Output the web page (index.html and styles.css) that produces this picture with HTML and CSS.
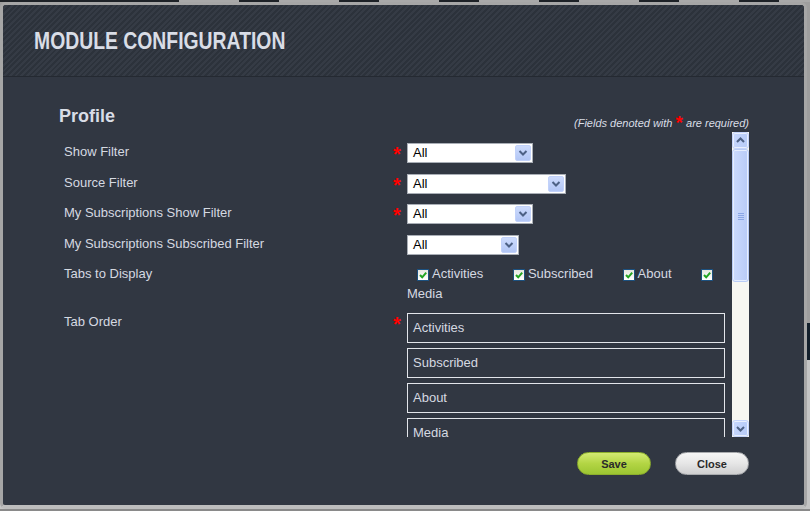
FILE: index.html
```html
<!DOCTYPE html>
<html>
<head>
<meta charset="utf-8">
<link rel="stylesheet" href="styles.css">
</head>
<body>
<div class="topstrip"><div class="ts-dark"></div><div class="ts-pattern"></div></div>
<div class="modal">
  <div class="header"><h1 class="title">MODULE CONFIGURATION</h1></div>
  <div class="content">
    <div class="profile-row">
      <h2 class="profile">Profile</h2>
      <div class="note">(Fields denoted with <span class="note-star">*</span> are required)</div>
    </div>
    <div class="scroll">
      <div class="scroll-content">
        <div class="row sel-row">
          <div class="label">Show Filter</div><div class="req">*</div>
          <div class="field"><div class="select w126"><span class="val">All</span><span class="drop"><svg width="14" height="14" viewBox="0 0 14 14"><polyline points="3.5,5 7,8.5 10.5,5" fill="none" stroke="#4d6185" stroke-width="2"/></svg></span></div></div>
        </div>
        <div class="row sel-row">
          <div class="label">Source Filter</div><div class="req">*</div>
          <div class="field"><div class="select w159"><span class="val">All</span><span class="drop"><svg width="14" height="14" viewBox="0 0 14 14"><polyline points="3.5,5 7,8.5 10.5,5" fill="none" stroke="#4d6185" stroke-width="2"/></svg></span></div></div>
        </div>
        <div class="row sel-row">
          <div class="label">My Subscriptions Show Filter</div><div class="req">*</div>
          <div class="field"><div class="select w126"><span class="val">All</span><span class="drop"><svg width="14" height="14" viewBox="0 0 14 14"><polyline points="3.5,5 7,8.5 10.5,5" fill="none" stroke="#4d6185" stroke-width="2"/></svg></span></div></div>
        </div>
        <div class="row sel-row last-sel">
          <div class="label">My Subscriptions Subscribed Filter</div><div class="req"></div>
          <div class="field"><div class="select w112"><span class="val">All</span><span class="drop"><svg width="14" height="14" viewBox="0 0 14 14"><polyline points="3.5,5 7,8.5 10.5,5" fill="none" stroke="#4d6185" stroke-width="2"/></svg></span></div></div>
        </div>
        <div class="row cb-row">
          <div class="label">Tabs to Display</div><div class="req"></div>
          <div class="field cb-field"><span class="cb"><svg width="10" height="10" viewBox="0 0 10 10"><polyline points="2,5 4.2,7.3 8.2,2.6" fill="none" stroke="#22a322" stroke-width="2"/></svg></span><span class="cb-label">Activities</span> <span class="cb"><svg width="10" height="10" viewBox="0 0 10 10"><polyline points="2,5 4.2,7.3 8.2,2.6" fill="none" stroke="#22a322" stroke-width="2"/></svg></span><span class="cb-label">Subscribed</span> <span class="cb"><svg width="10" height="10" viewBox="0 0 10 10"><polyline points="2,5 4.2,7.3 8.2,2.6" fill="none" stroke="#22a322" stroke-width="2"/></svg></span><span class="cb-label">About</span> <span class="cb"><svg width="10" height="10" viewBox="0 0 10 10"><polyline points="2,5 4.2,7.3 8.2,2.6" fill="none" stroke="#22a322" stroke-width="2"/></svg></span> <span class="cb-label">Media</span></div>
        </div>
        <div class="row order-row">
          <div class="label">Tab Order</div><div class="req">*</div>
          <div class="field">
            <div class="order-box">Activities</div>
            <div class="order-box">Subscribed</div>
            <div class="order-box">About</div>
            <div class="order-box">Media</div>
          </div>
        </div>
      </div>
      <div class="scrollbar">
        <div class="sb-btn"><svg width="15" height="15" viewBox="0 0 15 15"><polyline points="4,9 7.5,5.5 11,9" fill="none" stroke="#4d6185" stroke-width="2"/></svg></div>
        <div class="sb-thumb"><svg width="8" height="8" viewBox="0 0 8 8"><path d="M1 1.5H7M1 3.5H7M1 5.5H7M1 7.5H7" stroke="#8aa6e6" stroke-width="1"/></svg></div>
        <div class="sb-track"></div>
        <div class="sb-btn"><svg width="15" height="15" viewBox="0 0 15 15"><polyline points="4,6 7.5,9.5 11,6" fill="none" stroke="#4d6185" stroke-width="2"/></svg></div>
      </div>
    </div>
    <div class="actions">
      <button class="btn save">Save</button>
      <button class="btn close">Close</button>
    </div>
  </div>
</div>
</body>
</html>
```

FILE: styles.css
```css
html, body {
  margin: 0;
  padding: 0;
}
body {
  width: 810px;
  height: 511px;
  overflow: hidden;
  background: linear-gradient(to bottom, #9e9e9e 0, #9e9e9e 323px, #13202c 323px, #13202c 360px, #c4c4c4 360px, #c4c4c4 509px, #8a8a8a 509px);
  font-family: "Liberation Sans", Arial, sans-serif;
}
.topstrip {
  display: flex;
  height: 2px;
}
.ts-dark {
  width: 179px;
  background: #1e2227;
}
.ts-pattern {
  flex: 1;
  background: repeating-linear-gradient(90deg, #a9a9a9 0, #a9a9a9 60px, #1e2227 60px, #1e2227 100px);
}
.modal {
  width: 801px;
  height: 500px;
  border: 3px solid #a6a6a6;
  border-bottom: 4px solid #bdbdbd;
  border-radius: 6px;
  background: #313742;
  overflow: hidden;
  display: flex;
  flex-direction: column;
}
.header {
  flex: none;
  border-bottom: 1px solid #242931;
  background: repeating-linear-gradient(135deg, #2c323b 0, #2c323b 2px, #353b45 2px, #353b45 4px);
  display: flex;
  align-items: center;
  padding-left: 31px;
  box-sizing: border-box;
  height: 72px;
}
.title {
  margin: 0;
  font-family: "Liberation Sans", Arial, sans-serif;
  font-weight: bold;
  font-size: 24px;
  color: #d9dde6;
  line-height: 28px;
  margin-top: 0;
  transform: scaleX(0.807);
  transform-origin: 0 50%;
  white-space: nowrap;
}
.content {
  padding: 29px 55px 0 56px;
  display: flex;
  flex-direction: column;
}
.profile-row {
  height: 26px;
  display: flex;
  justify-content: space-between;
  align-items: flex-start;
}
.profile {
  margin: 0;
  font-size: 18px;
  line-height: 20px;
  font-weight: bold;
  color: #d9dde6;
}
.note {
  margin-top: 10px;
  font-size: 11px;
  line-height: 14px;
  font-style: italic;
  color: #dadee6;
}
.note-star {
  color: #ff0000;
  font-style: normal;
  font-weight: bold;
  font-size: 19px;
  line-height: 10px;
  vertical-align: -2px;
}
.scroll {
  height: 305px;
  display: flex;
}
.scroll-content {
  flex: 1;
  overflow: hidden;
  padding: 11px 0 0 5px;
  box-sizing: border-box;
}
.row {
  display: flex;
}
.sel-row {
  height: 30.5px;
}
.last-sel {
  height: 29px;
}
.label {
  width: 329px;
  flex: none;
  font-size: 13px;
  line-height: 17px;
  color: #d5d9e1;
}
.req {
  width: 14px;
  flex: none;
  color: #ff0000;
  font-weight: bold;
  font-size: 20px;
  line-height: 20px;
  padding-top: 1px;
}
.field {
  flex: 1;
  min-width: 0;
}
.select {
  height: 20px;
  box-sizing: border-box;
  border: 1px solid #a9aeb6;
  background: #ffffff;
  display: flex;
  align-items: center;
  justify-content: space-between;
  padding: 0 1px 0 5px;
}
.w126 { width: 126px; }
.w159 { width: 159px; }
.w112 { width: 112px; }
.val {
  font-size: 13px;
  color: #000000;
  line-height: 16px;
}
.drop {
  width: 16px;
  height: 16px;
  box-sizing: border-box;
  border: 1px solid #c2d2fa;
  border-radius: 2px;
  background: linear-gradient(#cddbfd, #b2c6f5);
  display: flex;
  align-items: center;
  justify-content: center;
}
.cb-row .label {
  line-height: 20px;
}
.cb-field {
  font-size: 13px;
  line-height: 20px;
  color: #d5d9e1;
}
.cb {
  display: inline-flex;
  align-items: center;
  justify-content: center;
  width: 12px;
  height: 12px;
  box-sizing: border-box;
  border: 1px solid #1c5180;
  background: linear-gradient(#e6e6e0, #ffffff);
  vertical-align: -2px;
  margin-left: 10px;
  margin-right: 3px;
}
.cb-label {
  margin-right: 16px;
}
.order-row {
  margin-top: 9px;
}
.order-row .label {
  line-height: 18px;
}
.order-box {
  width: 318px;
  height: 30px;
  box-sizing: border-box;
  border: 1px solid #e2e5ea;
  margin-bottom: 5px;
  font-size: 13px;
  line-height: 28px;
  padding-left: 5px;
  color: #d5d9e1;
}
.scrollbar {
  width: 17px;
  flex: none;
  background: #f7f7f1;
  display: flex;
  flex-direction: column;
}
.sb-btn {
  height: 17px;
  flex: none;
  box-sizing: border-box;
  border: 1px solid #c5d4fb;
  border-radius: 3px;
  box-shadow: inset 0 0 0 1px #e8effe;
  background: linear-gradient(90deg, #c6d6fd, #b7cbf8);
  display: flex;
  align-items: center;
  justify-content: center;
}
.sb-thumb {
  height: 133px;
  flex: none;
  box-sizing: border-box;
  border: 1px solid #b9ccf6;
  border-radius: 3px;
  box-shadow: inset 0 0 0 1px #e6eefe;
  background: linear-gradient(90deg, #cbdafd, #b8cbf7);
  display: flex;
  align-items: center;
  justify-content: center;
}
.sb-track {
  flex: 1;
}
.actions {
  display: flex;
  justify-content: flex-end;
  gap: 24px;
  margin-top: 15px;
}
.btn {
  width: 74px;
  height: 23px;
  border-radius: 12px;
  font-family: "Liberation Sans", Arial, sans-serif;
  font-weight: bold;
  font-size: 11px;
  color: #2a2a2a;
  padding: 0;
  cursor: pointer;
}
.save {
  border: 1px solid #8db02c;
  background: linear-gradient(#d3ea72, #b3d544 50%, #9cc532);
}
.close {
  border: 1px solid #a9abae;
  background: linear-gradient(#f6f6f6, #e6e6e6 50%, #cfcfd0);
}
```
